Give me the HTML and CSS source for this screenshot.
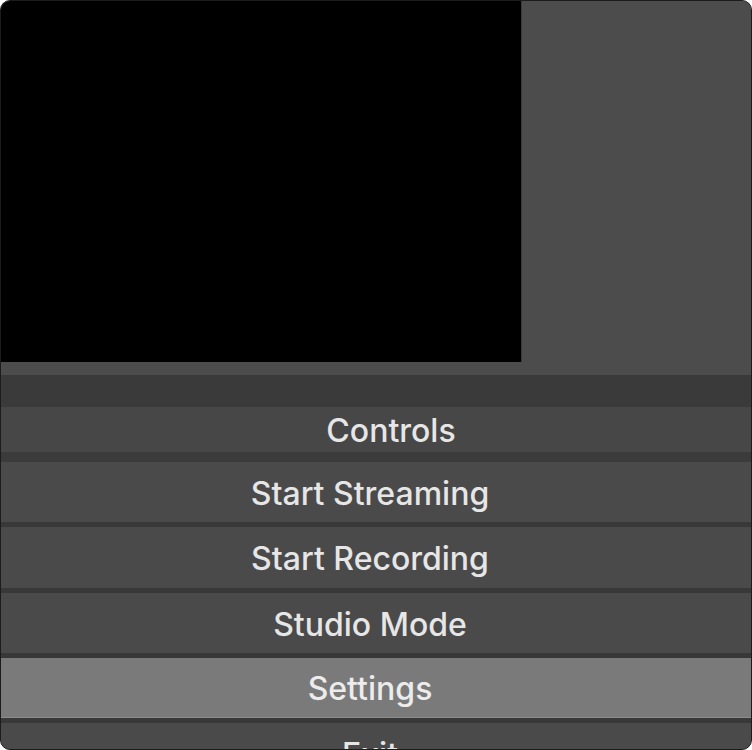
FILE: index.html
```html
<!DOCTYPE html>
<html>
<head>
<meta charset="utf-8">
<link rel="stylesheet" href="styles.css">
</head>
<body>
<div class="window">
  <div class="top">
    <div class="preview"></div>
    <div class="side"></div>
  </div>
  <div class="strip"></div>
  <div class="band"></div>
  <div class="dock-title">Controls</div>
  <div class="dock-gap"></div>
  <div class="buttons">
    <div class="btn">Start Streaming</div>
    <div class="btn">Start Recording</div>
    <div class="btn">Studio Mode</div>
    <div class="btn active">Settings</div>
    <div class="btn">Exit</div>
  </div>
</div>
</body>
</html>
```
FILE: styles.css
```css
html, body {
  margin: 0;
  padding: 0;
  background: #ffffff;
}
.window {
  width: 752px;
  height: 750px;
  box-sizing: border-box;
  border: 1px solid #1c1c1c;
  border-radius: 10px;
  overflow: hidden;
  background: #4c4c4c;
  display: flex;
  flex-direction: column;
  font-family: Inter, "Liberation Sans", sans-serif;
  font-weight: 500;
  color: #e6e6e6;
}
.top {
  display: flex;
  height: 361px;
  flex: none;
}
.preview {
  width: 520px;
  background: #000000;
}
.side {
  flex: 1;
  background: #4c4c4c;
  border-left: 1px solid #3a3a3a;
}
.strip {
  height: 13px;
  flex: none;
  background: #4c4c4c;
}
.band {
  height: 32px;
  flex: none;
  background: #3a3a3a;
}
.dock-title {
  height: 45px;
  flex: none;
  box-sizing: border-box;
  background: #474747;
  display: flex;
  align-items: center;
  justify-content: center;
  padding-left: 30px;
  padding-top: 3px;
  font-size: 32px;
  line-height: 1;
}
.dock-gap {
  height: 10px;
  flex: none;
  background: #3b3b3b;
}
.buttons {
  display: flex;
  flex-direction: column;
  gap: 5px;
  background: #383838;
  flex: 1;
}
.btn {
  height: 60px;
  flex: none;
  background: #4a4a4a;
  display: flex;
  align-items: center;
  justify-content: center;
  padding-right: 12px;
  padding-top: 3px;
  font-size: 32px;
  line-height: 1;
  box-sizing: border-box;
}
.btn:nth-child(2) {
  height: 61px;
}
.btn.active {
  background: #7a7a7a;
  border-bottom: 1px solid #8c8c8c;
  color: #ececec;
}
```
